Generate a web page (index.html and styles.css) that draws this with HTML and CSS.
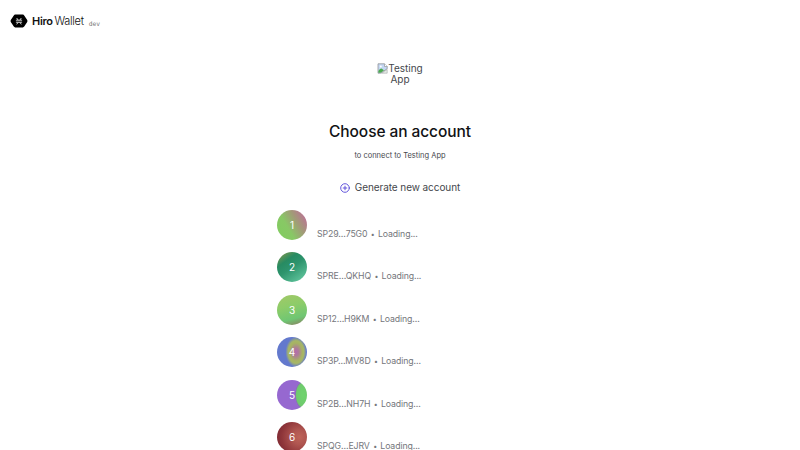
FILE: index.html
```html
<!DOCTYPE html>
<html lang="en">
<head>
<meta charset="utf-8">
<title>Hiro Wallet</title>
<link rel="stylesheet" href="styles.css">
</head>
<body>
<header class="header">
  <svg class="logo" viewBox="0 0 18 14" aria-hidden="true">
    <path d="M5.2.6h7.6q.9 0 1.4.8l3 4.7q.5.9 0 1.8l-3 4.7q-.5.8-1.4.8H5.2q-.9 0-1.4-.8l-3-4.7q-.5-.9 0-1.8l3-4.7q.5-.8 1.4-.8z" fill="#000"/>
    <path d="M5.900 6.200h6.200M5.900 8.200h6.200M6.700 4l1.500 2.200M11.300 4L9.800 6.200M8.200 8.200L6.700 10.400M9.800 8.200l1.500 2.200" fill="none" stroke="#fff" stroke-width=".8"/>
  </svg>
  <span class="brand"><b>Hiro</b> <span class="wallet">Wallet</span></span>
  <span class="env">dev</span>
</header>
<main class="main">
  <div class="app-icon">
    <div class="app-line"><svg class="broken" viewBox="0 0 11 11" aria-hidden="true">
      <path d="M1 .8h6.500l2.700 2.700v2.200L3.600 10.200H1z" fill="#c5d8f4" stroke="#929699" stroke-width=".8"/>
      <path d="M1.400 9.800V8.100q2-4 4.500-1.600l1 1L3.500 9.800z" fill="#4caa4f"/>
      <path d="M7.500.8v2.700h2.700" fill="#fff" stroke="#929699" stroke-width=".7"/>
      <path d="M4.500 10.200h5.700V6.500z" fill="#e7eee8" stroke="#929699" stroke-width=".5"/>
      <circle cx="3.800" cy="3.500" r="1" fill="#fff"/>
    </svg><span>Testing</span></div>
    <div>App</div>
  </div>
  <h1 class="title">Choose an account</h1>
  <p class="subtitle">to connect to Testing App</p>
  <div class="generate">
    <svg class="plus" viewBox="0 0 10 10" aria-hidden="true"><circle cx="5" cy="5" r="4.300"/><path d="M3.200 5h3.600M5 3.200v3.600"/></svg>
    <span>Generate new account</span>
  </div>
  <div class="accounts">
    <div class="account"><span class="avatar a1">1</span><span class="address">SP29…75G0 <i>•</i> Loading...</span></div>
    <div class="account"><span class="avatar a2">2</span><span class="address">SPRE…QKHQ <i>•</i> Loading...</span></div>
    <div class="account"><span class="avatar a3">3</span><span class="address">SP12…H9KM <i>•</i> Loading...</span></div>
    <div class="account"><span class="avatar a4">4</span><span class="address">SP3P…MV8D <i>•</i> Loading...</span></div>
    <div class="account"><span class="avatar a5">5</span><span class="address">SP2B…NH7H <i>•</i> Loading...</span></div>
    <div class="account"><span class="avatar a6">6</span><span class="address">SPQG…EJRV <i>•</i> Loading...</span></div>
  </div>
</main>
</body>
</html>
```
FILE: styles.css
```css
* { box-sizing: border-box; }
body {
  margin: 0;
  height: 450px;
  overflow: hidden;
  background: #fff;
  color: #45474c;
  font-family: Inter, "Liberation Sans", sans-serif;
}
.header {
  display: flex;
  align-items: center;
  height: 42px;
  padding-left: 10px;
}
.logo { width: 18px; height: 14px; }
.brand {
  margin-left: 4px;
  color: #111;
  font-size: 11px;
  line-height: 14px;
  letter-spacing: -0.3px;
  white-space: nowrap;
}
.brand b { font-weight: 600; }
.wallet { margin-left: -1px; font-weight: 300; }
.env {
  margin: 5px 0 0 5px;
  color: #777;
  font-family: "DejaVu Sans Mono", monospace;
  font-size: 6.3px;
  line-height: 8px;
}
.main { display: flex; flex-direction: column; align-items: center; }
.app-icon {
  margin-top: 21px;
  height: 22px;
  font-size: 10px;
  line-height: 11px;
  text-align: center;
}
.app-line { display: flex; height: 11px; }
.broken { width: 11px; height: 11px; }
.title {
  margin: 37px 0 0;
  color: #111214;
  font-size: 15.5px;
  font-weight: 500;
  line-height: 20px;
  letter-spacing: -0.08px;
}
.subtitle { margin: 9px 0 0; font-size: 7.5px; line-height: 10px; }
.generate {
  display: flex;
  align-items: center;
  gap: 5px;
  margin-top: 19px;
  height: 15px;
  font-size: 10px;
  letter-spacing: -0.08px;
}
.generate span { line-height: 13px; }
.plus { width: 10px; height: 10px; fill: none; stroke: #5546d8; stroke-width: .9; stroke-linecap: round; }
.accounts {
  display: flex;
  flex-direction: column;
  gap: 12.48px;
  width: 246px;
  margin-top: 15px;
}
.account { display: flex; height: 30px; gap: 10px; }
.avatar {
  display: flex;
  align-items: center;
  justify-content: center;
  width: 30px;
  height: 30px;
  flex: none;
  border-radius: 50%;
  color: #fff;
  font-size: 10px;
}
.address {
  margin-top: 18px;
  color: #74767b;
  font-size: 8.75px;
  line-height: 12px;
  letter-spacing: -0.11px;
  white-space: nowrap;
}
.address i { font-style: normal; font-size: 7px; margin: 0 1px; }
.a1 { background: linear-gradient(60deg, #83cb61 15%, #88c865 38%, #a29a78 65%, #bd7097 92%); }
.a2 { background: linear-gradient(145deg, #719451 10%, #278b62 30%, #2d946d 50%, #5fc39b 90%); }
.a3 { background: linear-gradient(165deg, #9fc968 5%, #8dcc69 38%, #6fc673 74%, #819b68 88%, #a66d60 100%); }
.a4 { background: radial-gradient(ellipse 10.5px 15px at 19px 15px, #b56bae 0, #ad7b9a 25%, #a6b363 60%, #a6b666 75%, #6379cd 100%); }
.a5 { background: radial-gradient(ellipse 8px 14px at 26px 15px, #6fd46e 0, #6fc96d 82%, #8771b4 95%, #9668d0 100%); }
.a6 { background: radial-gradient(circle at 75% 50%, #be6459 0, #af5550 28%, #8f363a 65%, #74232f 100%); }
```
